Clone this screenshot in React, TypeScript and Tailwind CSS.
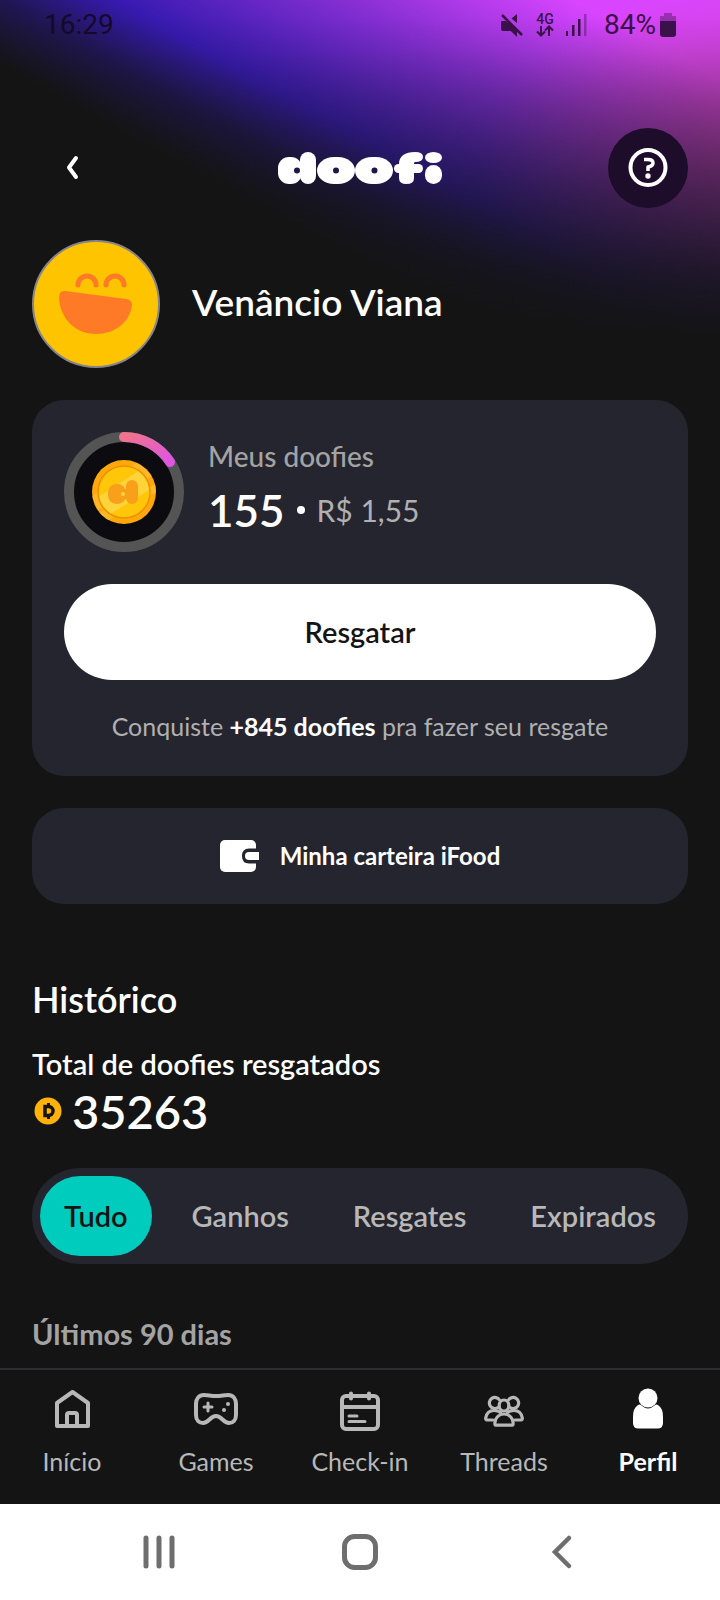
import React, { useState } from 'react';

interface IconProps {
  className?: string;
}

const HomeIcon = ({ className }: IconProps) => (
  <svg viewBox="0 0 48 48" className={className} fill="none" stroke="currentColor" strokeWidth="4" strokeLinejoin="round" aria-hidden="true">
    <path d="M9 17 24.5 6 40 17v23H9z" />
    <path d="M19 40V29q0-2 2-2h6q2 0 2 2v11" />
  </svg>
);

const GamesIcon = ({ className }: IconProps) => (
  <svg viewBox="0 0 48 48" className={className} fill="none" stroke="currentColor" strokeWidth="4" strokeLinecap="round" strokeLinejoin="round" aria-hidden="true">
    <path d="M12 9c4 0 7 1 12 1s8-1 12-1c5 0 8 4 8 9v11c0 5-3 8-7 8-6 0-7-7-13-7s-7 7-13 7c-4 0-7-3-7-8V18c0-5 3-9 8-9z" />
    <path d="M16 17v8M12 21h8" strokeWidth="3" />
    <circle cx="36" cy="18" r="2" fill="currentColor" stroke="none" />
    <circle cx="32" cy="24" r="2" fill="currentColor" stroke="none" />
  </svg>
);

const CheckInIcon = ({ className }: IconProps) => (
  <svg viewBox="0 0 48 48" className={className} fill="none" stroke="currentColor" strokeWidth="4" strokeLinecap="round" aria-hidden="true">
    <rect x="6" y="10" width="36" height="33" rx="4" />
    <path d="M15 7.500v5M33 7.500v5M6 21h36" />
    <path d="M13 30h8M13 35.500h16" strokeWidth="3" />
  </svg>
);

const ThreadsIcon = ({ className }: IconProps) => (
  <svg viewBox="0 0 48 48" className={className} fill="none" stroke="currentColor" strokeWidth="3.200" strokeLinecap="round" strokeLinejoin="round" aria-hidden="true">
    <path d="M18 21.500a5.500 5.500 0 1 1 1.500-7.500M30 21.500a5.500 5.500 0 1 0-1.500-7.500" />
    <ellipse cx="24" cy="19.500" rx="4.800" ry="5.500" />
    <path d="M13 34H7q-1.500 0-1.300-2C6.500 27 10 24.500 14 24.500q4 0 6.500 2M35 34h6q1.500 0 1.300-2C41.500 27 38 24.500 34 24.500q-4 0-6.500 2" />
    <path d="M15 38.500c-1-6 4-10.500 9-10.500s10 4.500 9 10.500q-.3.700-1 .7H16q-.8 0-1-.7z" />
  </svg>
);

const ProfileIcon = ({ className }: IconProps) => (
  <svg viewBox="0 0 48 48" className={className} fill="currentColor" aria-hidden="true">
    <circle cx="24" cy="12" r="9.500" />
    <path d="M14 19q2-1 3.500.5 6.500 6 13 0 1.500-1.500 3.500-.5 5 3 5 12v6q0 5.500-5.500 5.500h-19Q9 42.500 9 37v-6q0-9 5-12z" />
  </svg>
);

const navItems = [
  { label: 'Início', icon: HomeIcon },
  { label: 'Games', icon: GamesIcon },
  { label: 'Check-in', icon: CheckInIcon },
  { label: 'Threads', icon: ThreadsIcon },
  { label: 'Perfil', icon: ProfileIcon, active: true },
];

const tabs = ['Tudo', 'Ganhos', 'Resgates', 'Expirados'];

const Glow = () => (
  <div className="absolute inset-x-0 top-0 h-[400px]">
    <div className="absolute inset-0 bg-[linear-gradient(29deg,#141414_42%,#1f1650_50%,#361ab0_58%,#8b30d5_75%,#d945ff_90%)]"></div>
    <div className="absolute inset-0 bg-[radial-gradient(300px_180px_at_780px_160px,rgba(180,60,90,0.5)_0%,rgba(180,60,90,0)_100%)]"></div>
    <div className="absolute inset-0 bg-[linear-gradient(180deg,rgba(20,20,20,0)_4%,rgba(20,20,20,0.08)_12%,rgba(20,20,20,0.27)_25%,rgba(20,20,20,0.42)_36%,rgba(20,20,20,0.62)_50%,rgba(20,20,20,0.86)_68%,rgba(20,20,20,1)_84%)]"></div>
  </div>
);

const StatusBar = () => (
  <div className="flex h-[50px] items-center justify-between px-11 font-['Roboto',sans-serif] text-[28px] text-[#140a28]">
    <span>16:29</span>
    <div className="flex items-center text-[#3a1148]">
      <svg viewBox="0 0 24 24" className="mr-3 h-6 w-6" fill="currentColor" aria-hidden="true">
        <path d="M17 1v9L11.500 5.500zM2 8h4l11 11v5l-6-6H3q-2 0-2-2v-6q0-2 1-2z" />
        <path d="M7 8l10 8v7l-6-5z" />
        <path d="M2 2l20 20" stroke="currentColor" strokeWidth="2.500" />
      </svg>
      <div className="mr-3 flex flex-col items-center">
        <span className="text-[14px] font-medium leading-3">4G</span>
        <svg viewBox="0 0 18 12" className="h-3 w-[18px]" fill="none" stroke="currentColor" strokeWidth="2" aria-hidden="true">
          <path d="M5 1v9M1 6.500l4 4 4-4M13 11V2M9 5.500l4-4 4 4" />
        </svg>
      </div>
      <svg viewBox="0 0 22 24" className="mr-4 h-6 w-[22px]" fill="currentColor" aria-hidden="true">
        <path d="M0 18h2v5H0zM6 12h2.500v11H6zM12 6h2.500v17H12z" />
        <path d="M18 1h2.500v22H18z" opacity=".4" />
      </svg>
      <span>84%</span>
      <svg viewBox="0 0 16 24" className="ml-1 h-6 w-4" fill="currentColor" aria-hidden="true">
        <path d="M4 0h8v3h4v5H0V3h4z" opacity=".4" />
        <path d="M0 8h16v13q0 3-3 3H3q-3 0-3-3z" />
      </svg>
    </div>
  </div>
);

const Logo = () => (
  <svg viewBox="0 0 164 32" className="h-8 w-[164px]" fill="#fff" role="img" aria-label="doofi">
    <rect x="0" y="5" width="24" height="27" rx="11" />
    <rect x="22" y="0" width="16" height="32" rx="8" />
    <rect x="17" y="12" width="9" height="13" />
    <rect x="39" y="5" width="38" height="27" rx="17" ry="13.500" />
    <rect x="77" y="5" width="38" height="27" rx="17" ry="13.500" />
    <rect x="116" y="12" width="29" height="9" rx="4.500" />
    <path d="M121 12C121 4 127 0 137 0q8 0 8 5t-8 5q-1 0-1 2v14q0 6-7.500 6t-7.500-6z" />
    <ellipse cx="155.500" cy="5.500" rx="8.500" ry="5.500" />
    <rect x="147" y="13" width="17" height="19" rx="8.500" />
    <g fill="#1e1748">
      <circle cx="19" cy="18.500" r="3" />
      <circle cx="58" cy="18.500" r="3" />
      <circle cx="96.500" cy="18.500" r="3" />
    </g>
  </svg>
);

const Avatar = () => (
  <svg viewBox="0 0 128 128" className="h-32 w-32 shrink-0" role="img" aria-label="Avatar">
    <circle cx="64" cy="64" r="63" fill="#ffc400" stroke="#85858a" strokeWidth="2" />
    <path d="M46 45a9 9 0 0 1 18 0M74 45a9 9 0 0 1 18 0" fill="none" stroke="#ff7a26" strokeWidth="5" strokeLinecap="round" />
    <path d="M33 51l61 8q6 1 6 6c-2 18-18 29-36 29-21 0-36-16-37-36q0-8 6-7z" fill="#ff7a26" />
  </svg>
);

const ProgressCoin = () => (
  <svg viewBox="0 0 120 120" className="h-[120px] w-[120px] shrink-0" role="img" aria-label="155 de 1000 doofies">
    <defs>
      <linearGradient id="progress" x1="0" y1="0" x2="1" y2="1">
        <stop offset="0" stopColor="#f0738f" />
        <stop offset="1" stopColor="#dd55e0" />
      </linearGradient>
      <clipPath id="coin">
        <circle cx="60" cy="60" r="32" />
      </clipPath>
      <clipPath id="face">
        <circle cx="60" cy="60" r="25" />
      </clipPath>
    </defs>
    <circle cx="60" cy="60" r="55" fill="#0c0b10" stroke="#545454" strokeWidth="10" />
    <path d="M60 5A55 55 0 0 1 106 30" fill="none" stroke="url(#progress)" strokeWidth="10" strokeLinecap="round" />
    <circle cx="60" cy="60" r="32" fill="#ffa80b" />
    <g clipPath="url(#coin)">
      <path d="M74 30l14 14-54 34-6-14zM92 52v8L38 92l-6-10z" fill="#ffc23e" opacity=".6" />
    </g>
    <circle cx="60" cy="60" r="26" fill="#ffc60a" stroke="#ee9100" strokeWidth="1.500" />
    <g clipPath="url(#face)">
      <path d="M30 68l46-30 12 18-48 30z" fill="#ffd43a" />
    </g>
    <g fill="#f9a01b">
      <rect x="44" y="52" width="18" height="20" rx="8.500" />
      <rect x="62" y="48" width="12" height="24" rx="6" />
      <path d="M56 57h8v10h-8z" />
    </g>
    <circle cx="59" cy="62" r="2" fill="#ffd43a" />
  </svg>
);

const WalletIcon = () => (
  <svg viewBox="0 0 40 32" className="h-8 w-10" aria-hidden="true">
    <rect width="36" height="32" rx="5" fill="#fff" />
    <path d="M40 8.500H29q-7 0-7 7.500t7 7.500h11z" fill="#25252f" />
    <path d="M39 12H29q-4 0-4 4t4 4h10z" fill="#fff" />
  </svg>
);

const BottomNav = () => (
  <nav className="grid grid-cols-5 border-t-2 border-[#2c2c31] pt-4 pb-7">
    {navItems.map(({ label, icon: IconComponent, active }) => (
      <a
        key={label}
        href="#"
        aria-current={active ? 'page' : undefined}
        className={`flex flex-col items-center gap-3 text-[25px] leading-[30px] ${active ? 'font-bold text-white' : 'text-[#b8b8b8]'}`}
      >
        <IconComponent className="h-12 w-12" />
        {label}
      </a>
    ))}
  </nav>
);

const SystemBar = () => (
  <div className="grid h-24 grid-cols-3 bg-white px-[58px] text-[#6e6e6e]">
    <button type="button" aria-label="Recentes" className="flex items-center justify-center">
      <svg viewBox="0 0 36 36" className="h-9 w-9" stroke="currentColor" strokeWidth="5" strokeLinecap="round">
        <path d="M5 4v28M18 4v28M31 4v28" />
      </svg>
    </button>
    <button type="button" aria-label="Tela inicial" className="flex items-center justify-center">
      <svg viewBox="0 0 36 36" className="h-9 w-9" fill="none" stroke="currentColor" strokeWidth="5">
        <rect x="2.500" y="2.500" width="31" height="31" rx="10" />
      </svg>
    </button>
    <button type="button" aria-label="Voltar" className="flex items-center justify-center">
      <svg viewBox="0 0 36 36" className="h-9 w-9" fill="none" stroke="currentColor" strokeWidth="4.500" strokeLinecap="round">
        <path d="M26 4 12 18l14 14" />
      </svg>
    </button>
  </div>
);

const App = () => {
  const [tab, setTab] = useState('Tudo');

  return (
    <div className="relative flex min-h-screen flex-col bg-[#141414] font-['Lato','Liberation_Sans',sans-serif] text-white">
      <Glow />
      <div className="relative flex flex-1 flex-col">
        <StatusBar />

        <header className="flex items-center justify-between px-8 pt-[78px]">
          <button type="button" aria-label="Voltar" className="flex h-20 w-20 items-center justify-center">
            <svg viewBox="0 0 16 28" className="h-7 w-4" fill="none" stroke="currentColor" strokeWidth="4" strokeLinecap="round" strokeLinejoin="round">
              <path d="M12 4 5 13.500 12 23" />
            </svg>
          </button>
          <Logo />
          <button type="button" aria-label="Ajuda" className="flex h-20 w-20 items-center justify-center rounded-full bg-[#1e0d2a]">
            <svg viewBox="0 0 40 40" className="h-10 w-10" fill="none" stroke="currentColor" strokeWidth="4">
              <circle cx="20" cy="19.500" r="17.500" />
              <path d="M16 11.500h4q5 0 5 3.500 0 3-5 4v4" strokeWidth="3.500" strokeLinejoin="round" />
              <circle cx="20" cy="28" r="2.700" fill="currentColor" stroke="none" />
            </svg>
          </button>
        </header>

        <main className="px-8 pt-8">
          <section className="flex items-center gap-8">
            <Avatar />
            <h1 className="pb-1 text-[37px] font-semibold leading-10">Venâncio Viana</h1>
          </section>

          <section className="mt-8 rounded-4xl bg-[#25252f] p-8">
            <div className="flex items-center gap-6">
              <ProgressCoin />
              <div className="pb-2">
                <div className="text-[28px] font-medium leading-9 text-[#a3a3a3]">Meus doofies</div>
                <div className="mt-2 flex items-center gap-3">
                  <span className="text-[44px] font-semibold leading-[56px]">155</span>
                  <span className="h-2 w-2 rounded-full bg-white"></span>
                  <span className="text-[30px] text-[#b0b0b0]">R$ 1,55</span>
                </div>
              </div>
            </div>
            <button type="button" className="mt-8 h-24 w-full rounded-full bg-white text-[29px] font-semibold text-[#141414]">
              Resgatar
            </button>
            <p className="mt-[30px] pb-[2px] text-center text-[25px] leading-8 text-[#b0b0b0]">
              Conquiste <strong className="text-white">+845 doofies</strong> pra fazer seu resgate
            </p>
          </section>

          <button type="button" className="mt-8 flex h-24 w-full items-center justify-center gap-5 rounded-4xl bg-[#25252f] text-[24px] font-bold">
            <WalletIcon />
            Minha carteira iFood
          </button>

          <section className="mt-[72px]">
            <h2 className="text-[36px] font-semibold leading-[46px]">Histórico</h2>
            <div className="mt-6 text-[29px] font-semibold leading-9">Total de doofies resgatados</div>
            <div className="flex items-center gap-2 leading-[58px]">
              <svg viewBox="0 0 32 32" className="h-8 w-8" aria-hidden="true">
                <circle cx="16" cy="16" r="13.500" fill="#ffb30a" />
                <path d="M13 11.500h3.500a4.500 4.500 0 0 1 0 9H13z" fill="none" stroke="#141414" strokeWidth="3.500" />
                <path d="M15 8h3v3h-3zM15 21h3v3h-3z" fill="#141414" />
              </svg>
              <span className="text-[47px] font-semibold">35263</span>
            </div>

            <div role="tablist" className="mt-7 flex h-24 justify-between rounded-full bg-[#25252f] p-2">
              {tabs.map((name) => (
                <button
                  key={name}
                  type="button"
                  role="tab"
                  aria-selected={tab === name}
                  onClick={() => setTab(name)}
                  className={`rounded-full px-6 text-[29px] font-semibold ${tab === name ? 'bg-[#00ccbe] text-[#141414]' : 'text-[#b8b8b8]'}`}
                >
                  {name}
                </button>
              ))}
            </div>

            <h3 className="mt-[52px] text-[29px] font-bold leading-9 text-[#a3a3a3]">Últimos 90 dias</h3>
          </section>
        </main>

        <div className="mt-auto">
          <BottomNav />
          <SystemBar />
        </div>
      </div>
    </div>
  );
};

export default App;
